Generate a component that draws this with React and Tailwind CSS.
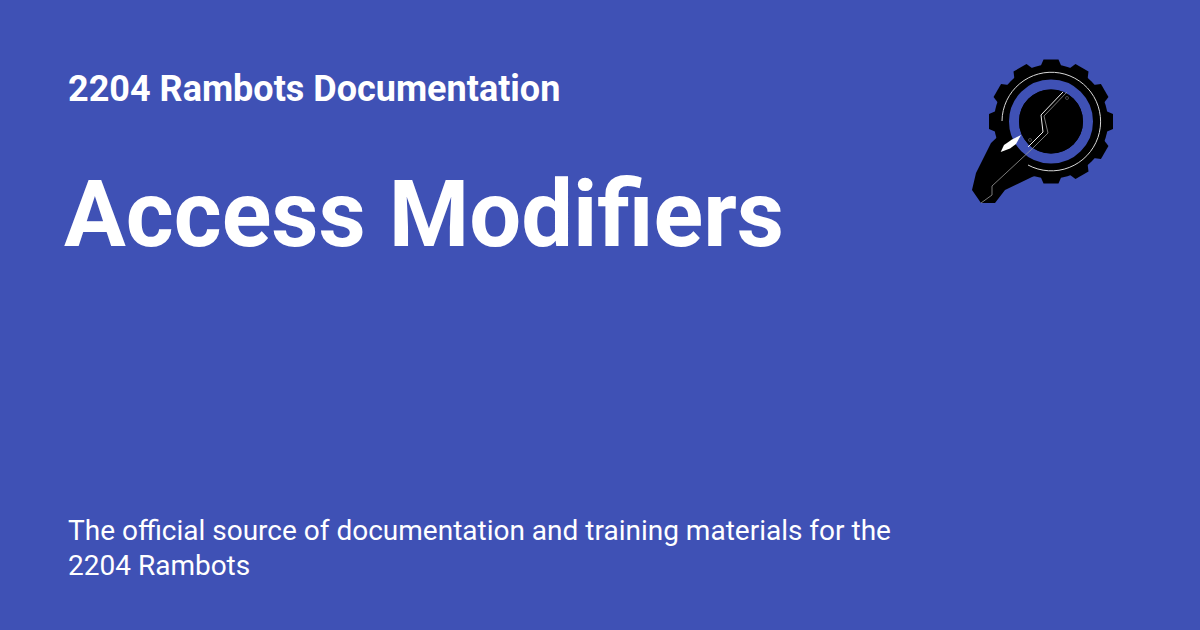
import React from 'react';

const teeth = [0, 30, 60, 90, 120, 150, 180, 210, 240, 270, 300, 330];

// Gear + key logo, coordinates match the page so it's easy to compare
const Logo = () => (
    <svg viewBox="960 50 170 165" className="w-[170px] h-[165px] shrink-0">
        <circle cx="1051" cy="121.5" r="57" fill="#000" />
        {teeth.map((deg) => (
            <polygon
                key={deg}
                points="-7.5,-62 7.5,-62 10.5,-55 -10.5,-55"
                fill="#000"
                transform={`translate(1051 121.5) rotate(${deg})`}
            />
        ))}
        {/* Key handle */}
        <polygon points="991,143 1010,125 1043,173 1032,177 1005,190 995,203 981,203 972,190 976,173" fill="#000" />
        {/* Outer thin ring, open in the lower left */}
        <path d="M1002 121 A49.3 49.3 0 1 1 1028 165" fill="none" stroke="#d8d8d8" strokeWidth="1" />
        {/* Blue ring and hub */}
        <circle cx="1051" cy="121.5" r="37" fill="none" stroke="#3f51b5" strokeWidth="10" />
        <circle cx="1051" cy="121.5" r="32" fill="#000" />
        {/* Key cuts */}
        <polyline points="981,203 992,195 992,186 1033,148 1048,133 1044,116 1067,92" fill="none" stroke="#9a9a9a" strokeWidth="0.8" />
        <polyline points="1028,147 1043,132 1041,115 1063,92" fill="none" stroke="#eee" strokeWidth="1" />
        <circle cx="1067" cy="98" r="1.5" fill="none" stroke="#777" strokeWidth="0.6" />
        <circle cx="1030" cy="140" r="1.5" fill="none" stroke="#777" strokeWidth="0.6" />
        <polygon points="1000.7,152 1004,145 1012,139.5 1021,135 1016,144 1010,148.5" fill="#fff" />
    </svg>
);

export default function App() {
    return (
        <div className="w-[1200px] h-[630px] bg-[#3f51b5] text-white flex flex-col justify-between pl-[68px] pr-[70px] pt-[50px] pb-[47px] font-['Roboto',sans-serif] overflow-hidden">
            <div className="flex justify-between items-start">
                <div className="min-w-0">
                    <h2 className="text-[36px] leading-[78px] font-bold">2204 Rambots Documentation</h2>
                    <h1 className="text-[92px] leading-[110px] font-bold -ml-[4px] mt-[32px]">Access Modifiers</h1>
                </div>
                <Logo />
            </div>
            <p className="text-[28px] leading-[35px] w-[860px]">
                The official source of documentation and training materials for the 2204 Rambots
            </p>
        </div>
    );
}
